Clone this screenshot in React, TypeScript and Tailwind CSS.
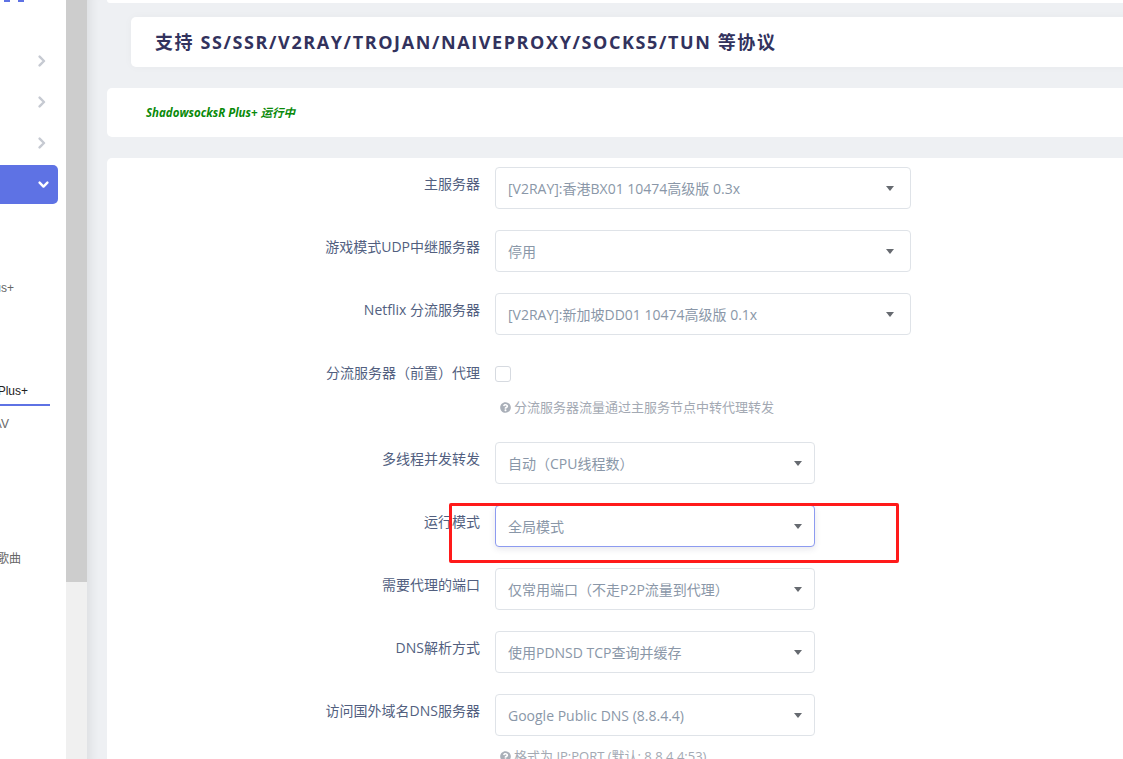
import React from "react";
import { FaQuestionCircle } from "react-icons/fa";

const FONT = { fontFamily: '"Open Sans", "Noto Sans CJK SC", sans-serif' };
const SIDE_FONT = { fontFamily: '"Liberation Sans", "Noto Sans CJK SC", sans-serif' };

function ChevronRight() {
  return (
    <svg width="8" height="12" viewBox="0 0 8 12" fill="none">
      <path d="M1.6 1.6 L6 6 L1.6 10.4" stroke="#c6cad2" strokeWidth="2.4" strokeLinecap="round" strokeLinejoin="round" />
    </svg>
  );
}

function ChevronDown() {
  return (
    <svg width="11" height="8" viewBox="0 0 11 8" fill="none">
      <path d="M1.6 1.6 L5.5 5.6 L9.4 1.6" stroke="#ffffff" strokeWidth="2.4" strokeLinecap="round" strokeLinejoin="round" />
    </svg>
  );
}

function Caret() {
  return <span className="h-0 w-0 border-x-[4px] border-t-[5px] border-x-transparent border-t-[#666a70]" />;
}

function Select({ text, wide, focused }: { text: string; wide?: boolean; focused?: boolean }) {
  return (
    <div
      className={
        "flex h-[42px] items-center justify-between rounded-[4px] border bg-white pl-[12px] text-[14px] text-[#8a97a8] " +
        (wide ? "w-[416px] pr-[16px] " : "w-[320px] pr-[12px] ") +
        (focused
          ? "border-[#8d9bf0] shadow-[0_2px_6px_rgba(50,50,93,0.12)]"
          : "border-[#dfe3e8]")
      }
    >
      <span className="whitespace-nowrap">{text}</span>
      <Caret />
    </div>
  );
}

function Row({ label, children, className }: { label: string; children: React.ReactNode; className?: string }) {
  return (
    <div className={"flex " + (className ?? "")}>
      <div className="w-[373px] shrink-0 whitespace-nowrap pt-[7px] text-right text-[14px] leading-[20px] text-[#525f7f]">
        {label}
      </div>
      <div className="ml-[15px]">{children}</div>
    </div>
  );
}

function Help({ text }: { text: string }) {
  return (
    <div className="flex items-center gap-[3px] pl-[5px] text-[13px] leading-[20px] text-[#a3a9b3]">
      <FaQuestionCircle size={11} color="#a9afb8" />
      <span className="whitespace-nowrap">{text}</span>
    </div>
  );
}

const subItems: { text: string; pr: number; active?: boolean }[] = [
  { text: "", pr: 80 },
  { text: "", pr: 80 },
  { text: "广告屏蔽大师 Plus+", pr: 52 },
  { text: "", pr: 80 },
  { text: "", pr: 80 },
  { text: "ShadowsocksR Plus+", pr: 16, active: true },
  { text: "WebDAV", pr: 57 },
  { text: "", pr: 80 },
  { text: "", pr: 80 },
  { text: "", pr: 80 },
  { text: "解锁网易云灰色歌曲", pr: 45 },
];

export default function App() {
  return (
    <div className="relative flex h-[759px] w-[1123px] overflow-hidden bg-[#eef0f3]" style={FONT}>
      {/* Sidebar */}
      <aside className="relative w-[66px] shrink-0 overflow-hidden bg-white" style={SIDE_FONT}>
        <div className="flex h-[40px] items-start gap-[8px] pl-[4px]">
          <div className="h-[2px] w-[6px] bg-[#5e72e4]" />
          <div className="h-[2px] w-[6px] bg-[#5e72e4]" />
        </div>
        {[0, 1, 2].map((i) => (
          <div key={i} className="flex h-[41px] items-center justify-end pr-[20px]">
            <ChevronRight />
          </div>
        ))}
        <div className="mt-[2px] flex h-[39px] w-[58px] items-center justify-end rounded-r-[5px] bg-[#5e72e4] pr-[9px]">
          <ChevronDown />
        </div>
        <div className="flex flex-col">
          {subItems.map((it, i) => (
            <div
              key={i}
              className="flex h-[33.8px] items-center justify-end whitespace-nowrap text-[12px]"
              style={{ paddingRight: it.active ? 16 : it.pr }}
            >
              {it.active ? (
                <span className="mt-[4px] flex h-[28px] items-center border-b-2 border-[#5e72e4] pr-[22px] text-[#222]">
                  {it.text}
                </span>
              ) : (
                <span className="text-[#666]">{it.text}</span>
              )}
            </div>
          ))}
        </div>
      </aside>

      {/* Sidebar scrollbar */}
      <div className="flex w-[21px] shrink-0 flex-col">
        <div className="h-[582px] bg-[#cdcdcd]" />
        <div className="flex-1 bg-[#f0f0f0]" />
      </div>

      {/* Main */}
      <main className="w-[1100px] shrink-0 pl-[20px] shadow-[inset_12px_0_10px_-8px_rgba(0,0,0,0.07)]">
        <div className="h-[3px] rounded-b-[4px] bg-white" />

        <div className="ml-[24px] mt-[14px] flex h-[50px] items-center rounded-[5px] bg-white pl-[24px] shadow-[0_0_10px_rgba(0,0,0,0.03)]">
          <h2 className="whitespace-nowrap text-[18px] font-bold tracking-[1.6px] text-[#32325d]">
            支持 SS/SSR/V2RAY/TROJAN/NAIVEPROXY/SOCKS5/TUN 等协议
          </h2>
        </div>

        <div className="mt-[21px] flex h-[49px] items-center rounded-[5px] bg-white pl-[39px]">
          <span className="whitespace-nowrap text-[11.5px] font-bold italic text-[#0a8a0a]">
            ShadowsocksR Plus+ 运行中
          </span>
        </div>

        <div className="mt-[21px] flex flex-col rounded-[5px] bg-white pb-[40px] pt-[9px]">
          <Row label="主服务器">
            <Select wide text="[V2RAY]:香港BX01 10474高级版 0.3x" />
          </Row>
          <Row label="游戏模式UDP中继服务器" className="mt-[21px]">
            <Select wide text="停用" />
          </Row>
          <Row label="Netflix 分流服务器" className="mt-[21px]">
            <Select wide text="[V2RAY]:新加坡DD01 10474高级版 0.1x" />
          </Row>
          <Row label="分流服务器（前置）代理" className="mt-[21px]">
            <div className="flex flex-col">
              <div className="mt-[10px] h-[16px] w-[16px] rounded-[3px] border border-[#d6dae0] bg-white" />
              <div className="mt-[15px]">
                <Help text="分流服务器流量通过主服务节点中转代理转发" />
              </div>
            </div>
          </Row>
          <Row label="多线程并发转发" className="mt-[25px]">
            <Select text="自动（CPU线程数）" />
          </Row>
          <Row label="运行模式" className="mt-[21px]">
            <Select focused text="全局模式" />
          </Row>
          <Row label="需要代理的端口" className="mt-[21px]">
            <Select text="仅常用端口（不走P2P流量到代理）" />
          </Row>
          <Row label="DNS解析方式" className="mt-[21px]">
            <Select text="使用PDNSD TCP查询并缓存" />
          </Row>
          <Row label="访问国外域名DNS服务器" className="mt-[21px]">
            <div className="flex flex-col">
              <Select text="Google Public DNS (8.8.4.4)" />
              <div className="mt-[10px]">
                <Help text="格式为 IP:PORT (默认: 8.8.4.4:53)" />
              </div>
            </div>
          </Row>
        </div>
      </main>

      {/* Annotation rectangle */}
      <div className="pointer-events-none absolute left-[449px] top-[503px] h-[60px] w-[450px] rounded-[2px] border-[3px] border-[#ff1a1a]" />
    </div>
  );
}
